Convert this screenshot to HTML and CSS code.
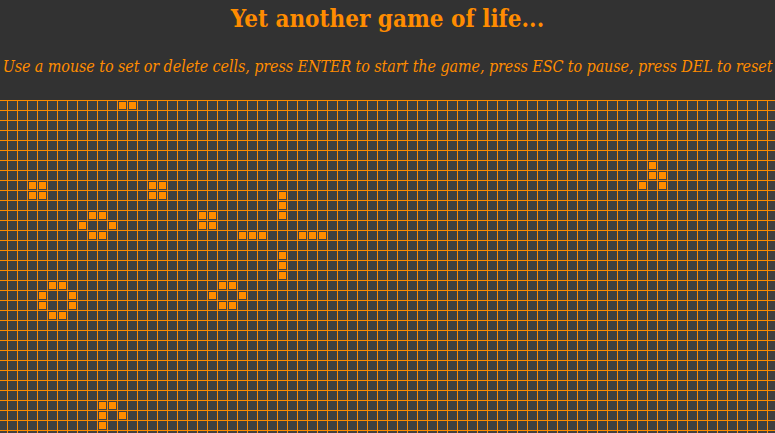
FILE: index.html
```html
<!DOCTYPE html>
<html lang="en">
<head>
<meta charset="utf-8">
<title>Yet another game of life...</title>
<link rel="stylesheet" href="styles.css">
</head>
<body>
<header class="top">
  <h1 class="title">Yet another game of life...</h1>
  <p class="hint">Use a mouse to set or delete cells, press ENTER to start the game, press ESC to pause, press DEL to reset</p>
</header>
<main class="board">
  <div class="cell" style="grid-area: 1 / 13"></div>
  <div class="cell" style="grid-area: 1 / 14"></div>

  <div class="cell" style="grid-area: 9 / 4"></div>
  <div class="cell" style="grid-area: 9 / 5"></div>
  <div class="cell" style="grid-area: 10 / 4"></div>
  <div class="cell" style="grid-area: 10 / 5"></div>

  <div class="cell" style="grid-area: 9 / 16"></div>
  <div class="cell" style="grid-area: 9 / 17"></div>
  <div class="cell" style="grid-area: 10 / 16"></div>
  <div class="cell" style="grid-area: 10 / 17"></div>

  <div class="cell" style="grid-area: 7 / 66"></div>
  <div class="cell" style="grid-area: 8 / 66"></div>
  <div class="cell" style="grid-area: 8 / 67"></div>
  <div class="cell" style="grid-area: 9 / 65"></div>
  <div class="cell" style="grid-area: 9 / 67"></div>

  <div class="cell" style="grid-area: 12 / 10"></div>
  <div class="cell" style="grid-area: 12 / 11"></div>
  <div class="cell" style="grid-area: 13 / 9"></div>
  <div class="cell" style="grid-area: 13 / 12"></div>
  <div class="cell" style="grid-area: 14 / 10"></div>
  <div class="cell" style="grid-area: 14 / 11"></div>

  <div class="cell" style="grid-area: 12 / 21"></div>
  <div class="cell" style="grid-area: 12 / 22"></div>
  <div class="cell" style="grid-area: 13 / 21"></div>
  <div class="cell" style="grid-area: 13 / 22"></div>

  <div class="cell" style="grid-area: 10 / 29"></div>
  <div class="cell" style="grid-area: 11 / 29"></div>
  <div class="cell" style="grid-area: 12 / 29"></div>

  <div class="cell" style="grid-area: 14 / 25"></div>
  <div class="cell" style="grid-area: 14 / 26"></div>
  <div class="cell" style="grid-area: 14 / 27"></div>

  <div class="cell" style="grid-area: 14 / 31"></div>
  <div class="cell" style="grid-area: 14 / 32"></div>
  <div class="cell" style="grid-area: 14 / 33"></div>

  <div class="cell" style="grid-area: 16 / 29"></div>
  <div class="cell" style="grid-area: 17 / 29"></div>
  <div class="cell" style="grid-area: 18 / 29"></div>

  <div class="cell" style="grid-area: 19 / 6"></div>
  <div class="cell" style="grid-area: 19 / 7"></div>
  <div class="cell" style="grid-area: 20 / 5"></div>
  <div class="cell" style="grid-area: 20 / 8"></div>
  <div class="cell" style="grid-area: 21 / 5"></div>
  <div class="cell" style="grid-area: 21 / 8"></div>
  <div class="cell" style="grid-area: 22 / 6"></div>
  <div class="cell" style="grid-area: 22 / 7"></div>

  <div class="cell" style="grid-area: 19 / 23"></div>
  <div class="cell" style="grid-area: 19 / 24"></div>
  <div class="cell" style="grid-area: 20 / 22"></div>
  <div class="cell" style="grid-area: 20 / 25"></div>
  <div class="cell" style="grid-area: 21 / 23"></div>
  <div class="cell" style="grid-area: 21 / 24"></div>

  <div class="cell" style="grid-area: 31 / 11"></div>
  <div class="cell" style="grid-area: 31 / 12"></div>
  <div class="cell" style="grid-area: 32 / 11"></div>
  <div class="cell" style="grid-area: 32 / 13"></div>
  <div class="cell" style="grid-area: 33 / 11"></div>
</main>
</body>
</html>
```
FILE: styles.css
```css
html, body {
  margin: 0;
  padding: 0;
  background: #323232;
  overflow: hidden;
}

body {
  font-family: "DejaVu Serif Condensed", "DejaVu Serif", "Liberation Serif", serif;
  font-stretch: semi-condensed;
  color: #ff8c00;
}

.top {
  height: 100px;
  box-sizing: border-box;
  padding-top: 2px;
  text-align: center;
}

.title {
  margin: 0;
  font-size: 24px;
  line-height: 34px;
  font-weight: bold;
}

.hint {
  margin: 21px 0 0;
  font-size: 16px;
  line-height: 20px;
  font-style: italic;
  letter-spacing: -0.1px;
  white-space: nowrap;
}

.board {
  display: grid;
  grid-template-columns: repeat(78, 10px);
  grid-template-rows: repeat(34, 10px);
  width: 781px;
  height: 341px;
  margin-left: -3px;
  background-color: #404040;
  background-image:
    linear-gradient(to right, #ff8c00 1px, transparent 1px),
    linear-gradient(to bottom, #ff8c00 1px, transparent 1px);
  background-size: 10px 10px;
}

.cell {
  width: 7px;
  height: 7px;
  margin: 2px 0 0 2px;
  background: #ff8c00;
}
```
